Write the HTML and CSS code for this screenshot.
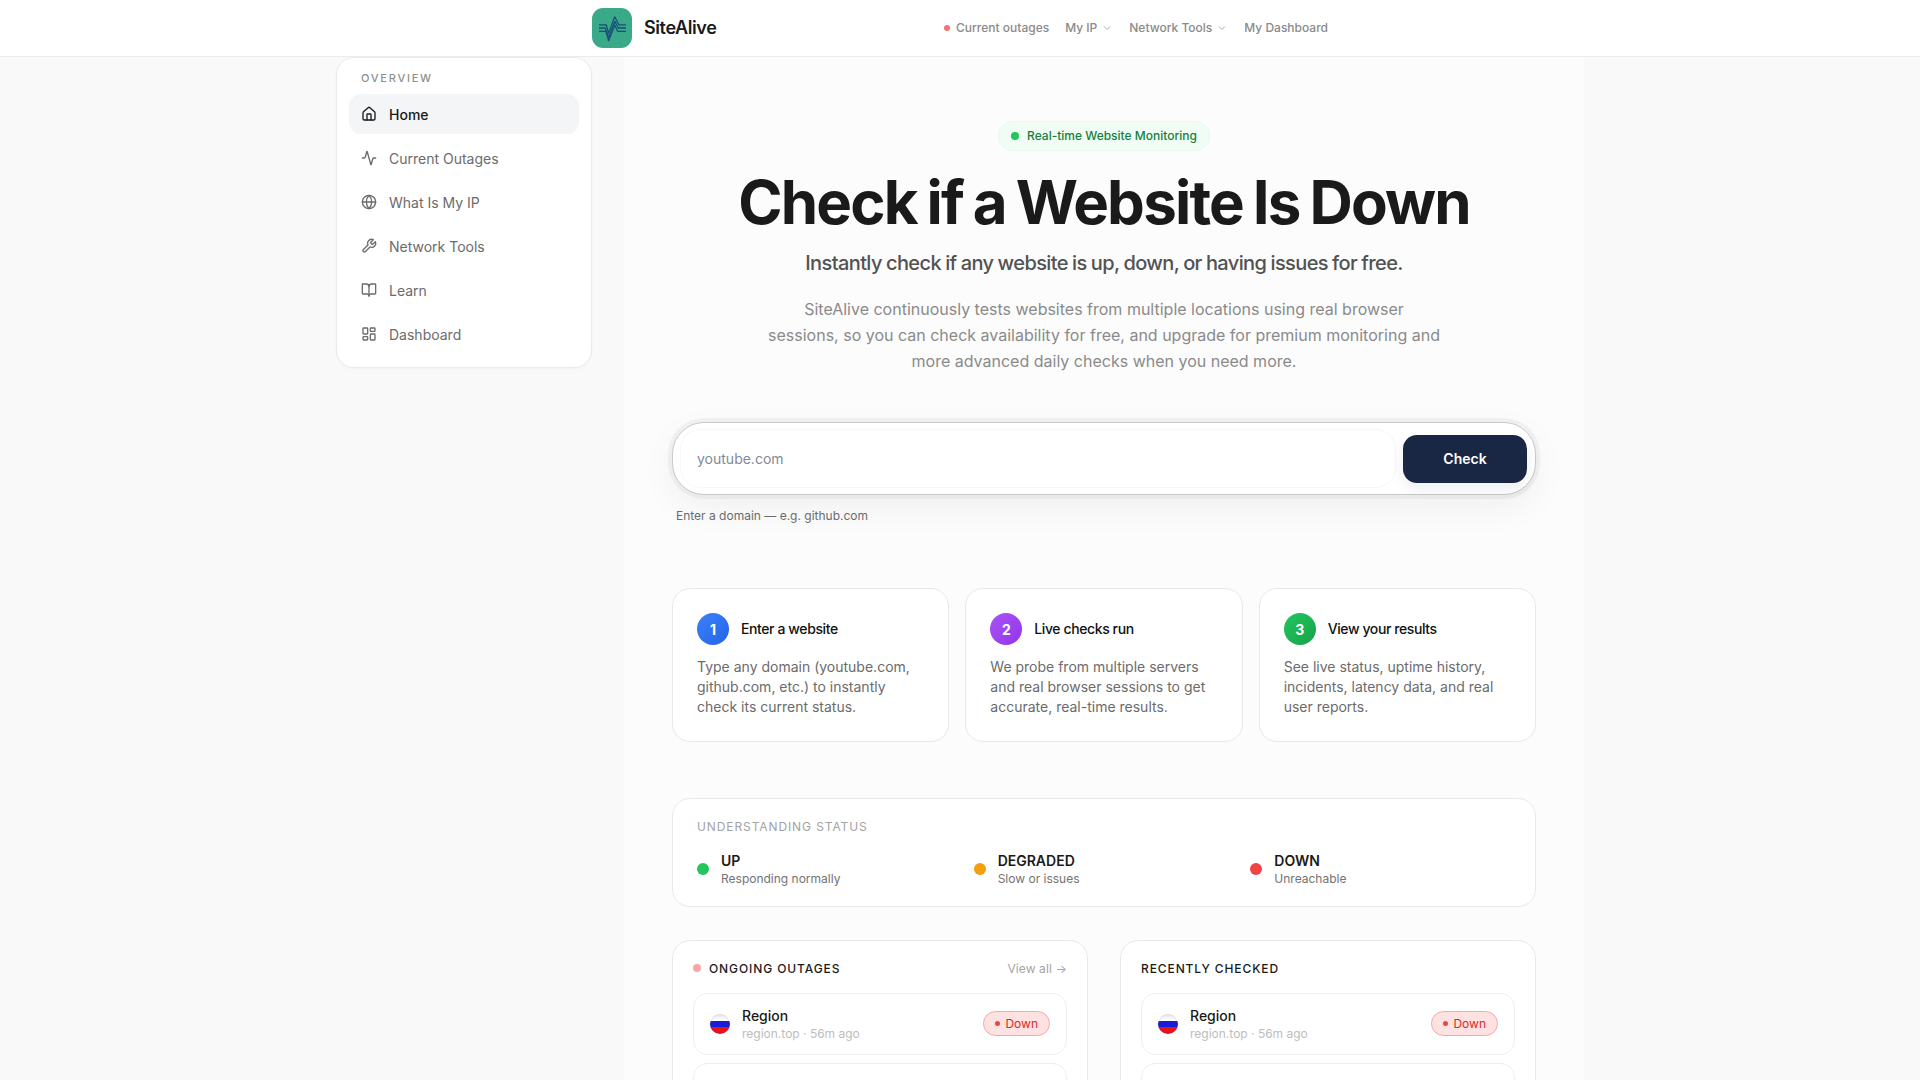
FILE: index.html

```html
<!DOCTYPE html>
<html lang="en">
<head>
  <meta charset="UTF-8">
  <meta name="viewport" content="width=device-width, initial-scale=1.0">
  <title>SiteAlive - Check if a Website Is Down</title>
  <link rel="stylesheet" href="styles.css">
</head>
<body>
  <header class="topbar">
    <div class="topbar-inner">
      <a class="brand" href="#">
        <svg class="brand-logo" viewBox="0 0 40 40" fill="none">
          <rect width="40" height="40" rx="11" fill="#3aa987"/>
          <g stroke="#17507a" stroke-width="1.3" stroke-linejoin="round">
            <path d="M7 16.8h7.2l2.5 8.6 6-16.6 4.2 8h7"/>
            <path d="M7 20h6.2l3.6 9.6 6-16.2 3.6 6.6h7.6"/>
            <path d="M7 23.3h6.8l2.9 9.4 6-15.6 3 6.2h8.3"/>
          </g>
        </svg>
        <span class="brand-name">SiteAlive</span>
      </a>
      <nav class="topnav">
        <a class="topnav-link" href="#"><span class="topnav-dot"></span>Current outages</a>
        <a class="topnav-link" href="#">My IP
          <svg class="caret" viewBox="0 0 24 24"><path d="m6 9 6 6 6-6"/></svg>
        </a>
        <a class="topnav-link" href="#">Network Tools
          <svg class="caret" viewBox="0 0 24 24"><path d="m6 9 6 6 6-6"/></svg>
        </a>
        <a class="topnav-link" href="#">My Dashboard</a>
      </nav>
    </div>
  </header>

  <div class="layout">
    <aside class="sidebar">
      <div class="sidebar-title">Overview</div>
      <a class="side-link active" href="#">
        <svg class="icon" viewBox="0 0 24 24"><path d="M15 21v-8a1 1 0 0 0-1-1h-4a1 1 0 0 0-1 1v8"/><path d="M3 10a2 2 0 0 1 .709-1.528l7-5.999a2 2 0 0 1 2.582 0l7 5.999A2 2 0 0 1 21 10v9a2 2 0 0 1-2 2H5a2 2 0 0 1-2-2z"/></svg>
        Home
      </a>
      <a class="side-link" href="#">
        <svg class="icon" viewBox="0 0 24 24"><path d="M22 12h-2.48a2 2 0 0 0-1.93 1.46l-2.35 8.36a.25.25 0 0 1-.48 0L9.24 2.18a.25.25 0 0 0-.48 0l-2.35 8.36A2 2 0 0 1 4.49 12H2"/></svg>
        Current Outages
      </a>
      <a class="side-link" href="#">
        <svg class="icon" viewBox="0 0 24 24"><circle cx="12" cy="12" r="10"/><path d="M12 2a14.5 14.5 0 0 0 0 20 14.5 14.5 0 0 0 0-20"/><path d="M2 12h20"/></svg>
        What Is My IP
      </a>
      <a class="side-link" href="#">
        <svg class="icon" viewBox="0 0 24 24"><path d="M14.7 6.3a1 1 0 0 0 0 1.4l1.6 1.6a1 1 0 0 0 1.4 0l3.77-3.77a6 6 0 0 1-7.94 7.94l-6.91 6.91a2.12 2.12 0 0 1-3-3l6.91-6.91a6 6 0 0 1 7.94-7.94l-3.76 3.76z"/></svg>
        Network Tools
      </a>
      <a class="side-link" href="#">
        <svg class="icon" viewBox="0 0 24 24"><path d="M12 7v14"/><path d="M3 18a1 1 0 0 1-1-1V4a1 1 0 0 1 1-1h5a4 4 0 0 1 4 4 4 4 0 0 1 4-4h5a1 1 0 0 1 1 1v13a1 1 0 0 1-1 1h-6a3 3 0 0 0-3 3 3 3 0 0 0-3-3z"/></svg>
        Learn
      </a>
      <a class="side-link" href="#">
        <svg class="icon" viewBox="0 0 24 24"><rect x="3" y="3" width="7" height="9" rx="1"/><rect x="14" y="3" width="7" height="5" rx="1"/><rect x="14" y="12" width="7" height="9" rx="1"/><rect x="3" y="16" width="7" height="5" rx="1"/></svg>
        Dashboard
      </a>
    </aside>

    <main class="main">
      <section class="hero">
        <div class="pill"><span class="pill-dot"></span><span class="pill-text">Real-time Website Monitoring</span></div>
        <h1>Check if a Website Is Down</h1>
        <p class="lead">Instantly check if any website is up, down, or having issues for free.</p>
        <p class="desc">SiteAlive continuously tests websites from multiple locations using real browser sessions, so you can check availability for free, and upgrade for premium monitoring and more advanced daily checks when you need more.</p>
      </section>

      <form class="search">
        <input class="search-input" type="text" placeholder="youtube.com">
        <button class="search-btn" type="button">Check</button>
      </form>
      <p class="hint">Enter a domain — e.g. github.com</p>

      <section class="steps">
        <div class="card step">
          <div class="step-head"><span class="step-num blue">1</span><h3>Enter a website</h3></div>
          <p>Type any domain (youtube.com, github.com, etc.) to instantly check its current status.</p>
        </div>
        <div class="card step">
          <div class="step-head"><span class="step-num purple">2</span><h3>Live checks run</h3></div>
          <p>We probe from multiple servers and real browser sessions to get accurate, real-time results.</p>
        </div>
        <div class="card step">
          <div class="step-head"><span class="step-num green">3</span><h3>View your results</h3></div>
          <p>See live status, uptime history, incidents, latency data, and real user reports.</p>
        </div>
      </section>

      <section class="card legend">
        <div class="legend-title">Understanding status</div>
        <div class="legend-grid">
          <div class="legend-item">
            <span class="legend-dot up"></span>
            <div><strong>UP</strong><small>Responding normally</small></div>
          </div>
          <div class="legend-item">
            <span class="legend-dot degraded"></span>
            <div><strong>DEGRADED</strong><small>Slow or issues</small></div>
          </div>
          <div class="legend-item">
            <span class="legend-dot down"></span>
            <div><strong>DOWN</strong><small>Unreachable</small></div>
          </div>
        </div>
      </section>

      <section class="lists">
        <div class="card list">
          <div class="list-head">
            <span class="list-dot"></span>
            <h2>Ongoing outages</h2>
            <a class="view-all" href="#">View all →</a>
          </div>
          <div class="row">
            <span class="flag"></span>
            <div class="row-text"><b>Region</b><small>region.top · 56m ago</small></div>
            <span class="badge"><i></i>Down</span>
          </div>
          <div class="row"></div>
        </div>
        <div class="card list">
          <div class="list-head">
            <h2>Recently checked</h2>
          </div>
          <div class="row">
            <span class="flag"></span>
            <div class="row-text"><b>Region</b><small>region.top · 56m ago</small></div>
            <span class="badge"><i></i>Down</span>
          </div>
          <div class="row"></div>
        </div>
      </section>
    </main>
  </div>
</body>
</html>
```

FILE: styles.css

```css
* {
  box-sizing: border-box;
}

html, body {
  height: 100%;
  overflow: hidden;
}

body {
  margin: 0;
  background: #f9f9f9;
  color: #1a1a1a;
  font-family: Inter, "Liberation Sans", sans-serif;
}

a {
  color: inherit;
  text-decoration: none;
}

/* top bar */
.topbar {
  height: 57px;
  background: #fff;
  border-bottom: 1px solid #ebebeb;
}

.topbar-inner {
  width: 1248px;
  height: 56px;
  margin: 0 auto;
  padding-left: 256px;
  display: flex;
  align-items: center;
}

.brand {
  display: flex;
  align-items: center;
  gap: 12px;
  width: 352px;
}

.brand-logo {
  width: 40px;
  height: 40px;
}

.brand-name {
  padding-bottom: 1px;
  font-size: 18px;
  font-weight: 600;
  letter-spacing: -0.4px;
}

.topnav {
  display: flex;
  align-items: center;
  gap: 16px;
  padding-bottom: 1px;
}

.topnav-link {
  display: flex;
  align-items: center;
  font-size: 12px;
  font-weight: 500;
  color: #8a8a8a;
}

.topnav-dot {
  width: 6px;
  height: 6px;
  margin-right: 6px;
  border-radius: 50%;
  background: #f87171;
}

.caret {
  width: 12px;
  height: 12px;
  margin-left: 4px;
  fill: none;
  stroke: #aaa;
  stroke-width: 2;
}

/* page layout */
.layout {
  width: 1248px;
  margin: 0 auto;
  display: flex;
  gap: 32px;
  align-items: flex-start;
}

.sidebar {
  width: 256px;
  flex-shrink: 0;
  padding: 13px 12px;
  background: #fff;
  border: 1px solid #ebebeb;
  border-radius: 18px;
  box-shadow: 0 1px 3px rgba(0, 0, 0, 0.03);
}

.sidebar-title {
  padding: 0 12px;
  height: 23px;
  font-size: 11px;
  line-height: 15px;
  font-weight: 500;
  letter-spacing: 1.75px;
  text-transform: uppercase;
  color: #8f8f8f;
}

.side-link {
  height: 40px;
  margin-bottom: 4px;
  padding: 0 12px;
  display: flex;
  align-items: center;
  gap: 12px;
  border-radius: 12px;
  font-size: 14px;
  color: #6b6b6b;
}

.side-link:last-child {
  margin-bottom: 0;
}

.side-link.active {
  background: #f4f5f6;
  color: #1a1a1a;
  font-weight: 500;
}

.icon {
  width: 16px;
  height: 16px;
  flex-shrink: 0;
  fill: none;
  stroke: currentColor;
  stroke-width: 2;
  stroke-linecap: round;
  stroke-linejoin: round;
}

.main {
  width: 960px;
  height: 1100px;
  padding: 64px 48px 0;
  background: #fcfcfc;
}

/* hero */
.hero {
  text-align: center;
}

.pill {
  display: inline-flex;
  align-items: center;
  height: 30px;
  padding: 0 12px;
  gap: 8px;
  background: #f0fdf4;
  border: 1px solid #e6f9ec;
  border-radius: 15px;
  font-size: 12px;
  font-weight: 500;
  color: #15803d;
}

.pill-text {
  padding-bottom: 1px;
}

.pill-dot {
  width: 8px;
  height: 8px;
  border-radius: 50%;
  background: #22c55e;
}

h1 {
  margin: 18px 0 14px;
  font-size: 60px;
  line-height: 66px;
  font-weight: 700;
  letter-spacing: -1.8px;
  word-spacing: -2.6px;
  color: #1a1a1a;
}

.lead {
  margin: 0;
  font-size: 20px;
  line-height: 28px;
  font-weight: 500;
  letter-spacing: -0.6px;
  word-spacing: -0.6px;
  color: #525252;
}

.desc {
  width: 673px;
  margin: 19px auto 0;
  font-size: 16px;
  line-height: 26px;
  color: #8a8a8a;
}

/* search */
.search {
  margin-top: 48px;
  padding: 6px 8px 6px 7px;
  display: flex;
  align-items: center;
  gap: 7px;
  background: #fff;
  border: 1px solid #c9c9c9;
  border-radius: 32px;
  box-shadow: 0 0 0 4px rgba(0, 0, 0, 0.04), 0 12px 36px rgba(0, 0, 0, 0.05);
}

.search-input {
  flex: 1;
  height: 59px;
  padding: 0 16px;
  background: #fff;
  border: 1px solid #f7f7f7;
  border-radius: 20px;
  outline: none;
  font-family: inherit;
  font-size: 14px;
}

.search-input::placeholder {
  color: #828a96;
}

.search-btn {
  width: 124px;
  height: 48px;
  background: #1a2744;
  border: none;
  border-radius: 14px;
  box-shadow: 0 6px 14px rgba(26, 39, 68, 0.08);
  color: #fff;
  font-family: inherit;
  font-size: 14px;
  font-weight: 600;
}

.hint {
  margin: 13px 0 0 4px;
  font-size: 12px;
  line-height: 16px;
  color: #6b6b6b;
}

/* cards */
.card {
  background: #fff;
  border: 1px solid #e8e8e8;
  border-radius: 18px;
}

.steps {
  margin-top: 64px;
  display: grid;
  grid-template-columns: repeat(3, 1fr);
  gap: 16px;
}

.step {
  height: 154px;
  padding: 24px;
}

.step-head {
  display: flex;
  align-items: center;
  gap: 12px;
  margin-bottom: 12px;
}

.step-head h3 {
  margin: 0 0 1px;
  font-size: 14px;
  font-weight: 500;
  letter-spacing: -0.4px;
  color: #111;
}

.step-num {
  width: 32px;
  height: 32px;
  display: flex;
  align-items: center;
  justify-content: center;
  border-radius: 50%;
  color: #fff;
  font-size: 14px;
  font-weight: 700;
}

.step-num.blue {
  background: linear-gradient(135deg, #3b82f6, #2563eb);
}

.step-num.purple {
  background: linear-gradient(135deg, #a855f7, #9333ea);
}

.step-num.green {
  background: linear-gradient(135deg, #22c55e, #16a34a);
}

.step p {
  margin: 0;
  font-size: 14px;
  line-height: 20px;
  color: #6b6b6b;
}

/* status legend */
.legend {
  margin-top: 56px;
  height: 109px;
  padding: 20px 24px;
}

.legend-title {
  font-size: 12px;
  line-height: 16px;
  letter-spacing: 0.9px;
  text-transform: uppercase;
  color: #a3a3a3;
}

.legend-grid {
  margin-top: 17px;
  display: grid;
  grid-template-columns: repeat(3, 1fr);
  gap: 16px;
}

.legend-item {
  display: flex;
  align-items: center;
  gap: 12px;
}

.legend-item strong {
  display: block;
  font-size: 14px;
  line-height: 18px;
  font-weight: 600;
}

.legend-item small {
  display: block;
  font-size: 12px;
  line-height: 17px;
  color: #737373;
}

.legend-dot {
  width: 12px;
  height: 12px;
  margin-bottom: 2px;
  border-radius: 50%;
}

.legend-dot.up {
  background: #22c55e;
}

.legend-dot.degraded {
  background: #f59e0b;
}

.legend-dot.down {
  background: #ef4444;
}

/* lists */
.lists {
  margin-top: 33px;
  display: grid;
  grid-template-columns: 1fr 1fr;
  gap: 32px;
}

.list {
  padding: 19px 20px 20px;
}

.list-head {
  height: 16px;
  margin-bottom: 17px;
  display: flex;
  align-items: center;
  gap: 8px;
}

.list-head h2 {
  margin: 0;
  font-size: 12px;
  font-weight: 500;
  letter-spacing: 0.9px;
  text-transform: uppercase;
  color: #1a1a1a;
}

.list-dot {
  width: 8px;
  height: 8px;
  border-radius: 50%;
  background: #f8a5a8;
}

.view-all {
  margin-left: auto;
  font-size: 12px;
  letter-spacing: 0.1px;
  color: #a3a3a3;
}

.row {
  height: 62px;
  margin-bottom: 8px;
  padding: 0 16px;
  display: flex;
  align-items: center;
  gap: 12px;
  background: #fff;
  border: 1px solid #eeeeee;
  border-radius: 14px;
}

.flag {
  width: 20px;
  height: 20px;
  flex-shrink: 0;
  border-radius: 50%;
  background: linear-gradient(#e8e8e8 0, #fff 33%, #1c1cd8 33%, #1c1cd8 67%, #e8141c 67%);
  box-shadow: inset 0 0 0 1px rgba(0, 0, 0, 0.08);
}

.row-text {
  flex: 1;
}

.row-text b {
  display: block;
  font-size: 14px;
  line-height: 18px;
  font-weight: 500;
}

.row-text small {
  display: block;
  font-size: 12px;
  line-height: 17px;
  color: #bdbdbd;
}

.badge {
  height: 25px;
  margin-bottom: 1px;
  padding: 0 11px;
  display: flex;
  align-items: center;
  gap: 5px;
  background: #fee2e2;
  border: 1px solid #fca5a5;
  border-radius: 13px;
  font-size: 12px;
  color: #dc2626;
}

.badge i {
  width: 5px;
  height: 5px;
  border-radius: 50%;
  background: #ef4444;
}
```
